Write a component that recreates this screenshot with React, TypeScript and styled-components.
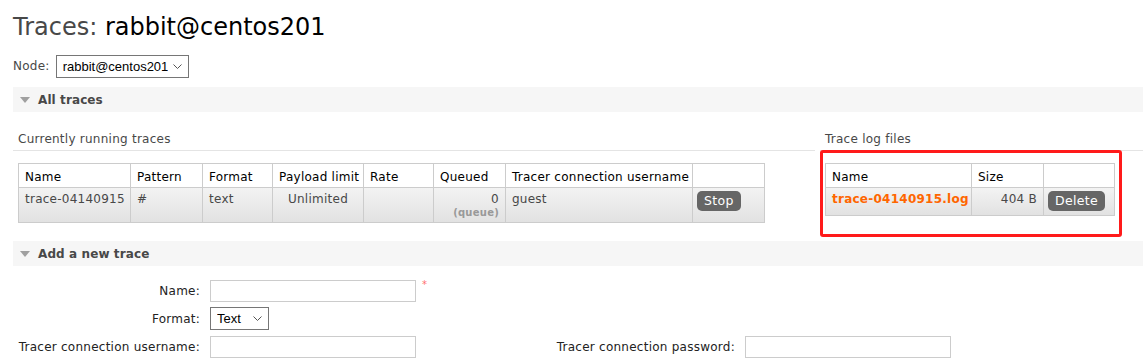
import React from 'react';
import styled, { createGlobalStyle } from 'styled-components';

const GlobalStyle = createGlobalStyle`
    html, body {
        margin: 0;
        padding: 0;
        background: #fff;
        overflow: hidden;
    }
    body {
        font-family: 'DejaVu Sans', Verdana, sans-serif;
        font-size: 12px;
        letter-spacing: 0.25px;
        color: #484848;
    }
`;

const Page = styled.div`
    width: 1200px;
    padding: 0 0 0 13px;
`;

const Title = styled.h1`
    margin: 10px 0 0;
    font-size: 24px;
    line-height: 34px;
    font-weight: normal;
    letter-spacing: 0;
    color: #484848;

    b {
        font-weight: normal;
        color: #000;
    }
`;

const NodeRow = styled.div`
    display: flex;
    align-items: center;
    gap: 6px;
    margin-top: 10px;
    height: 24px;
`;

const Label = styled.span`
    color: #484848;
`;

const SelectBox = styled.span<{ $width: number }>`
    position: relative;
    display: inline-block;
    width: ${({ $width }) => $width}px;
    height: 23px;
`;

const Select = styled.select`
    appearance: none;
    width: 100%;
    height: 100%;
    box-sizing: border-box;
    font-family: 'Liberation Sans', Arial, sans-serif;
    font-size: 13px;
    letter-spacing: 0;
    color: #000;
    border: 1px solid #767676;
    border-radius: 0;
    background: #fff;
    padding: 0 20px 0 6px;
`;

const Chevron = styled.svg`
    position: absolute;
    right: 7px;
    top: 9px;
    pointer-events: none;
`;

const SectionBar = styled.div<{ $top: number }>`
    display: flex;
    align-items: center;
    height: 25px;
    margin-top: ${({ $top }) => $top}px;
    background: #f6f6f6;
    font-weight: bold;
    letter-spacing: 0.1px;
    color: #484848;
    gap: 8px;
    padding-left: 7px;
`;

const Caret = styled.span`
    width: 0;
    height: 0;
    border-left: 5px solid transparent;
    border-right: 5px solid transparent;
    border-top: 6px solid #a0a0a0;
`;

const Columns = styled.div`
    display: flex;
    gap: 5px;
`;

const LeftCol = styled.div`
    width: 802px;
`;

const RightCol = styled.div`
    flex: 1;
`;

const SubHeading = styled.h3`
    margin: 0;
    padding: 19px 5px 3px;
    font-size: 12px;
    line-height: 16px;
    font-weight: normal;
    color: #484848;
    border-bottom: 1px solid #e4e4e4;
`;

const Highlight = styled.div`
    border: 3px solid #ff1a1a;
    border-radius: 3px;
    margin-top: -1px;
    padding: 10px 5px 18px 2px;
    width: 289px;
`;

const Table = styled.table<{ $width: number; $inset?: number; $top?: number }>`
    border-collapse: collapse;
    table-layout: fixed;
    width: ${({ $width }) => $width}px;
    margin: ${({ $top = 12 }) => $top}px 0 0 ${({ $inset = 0 }) => $inset}px;

    th,
    td {
        border: 1px solid #cccccc;
        padding: 3px 6px 4px;
        text-align: left;
        vertical-align: top;
        line-height: 16px;
        white-space: nowrap;
    }

    th {
        padding: 5px 6px 2px;
        font-weight: normal;
        color: #000;
        background: #fff;
    }

    tbody tr {
        background: linear-gradient(#f3f3f3, #e1e1e1);
    }

    td {
        color: #484848;
    }
`;

const NumCell = styled.td<{ $align?: 'right' | 'center' }>`
    && {
        text-align: ${({ $align = 'right' }) => $align};
    }
`;

const Sub = styled.sub`
    display: block;
    font-size: 10px;
    line-height: 10px;
    font-weight: bold;
    color: #999;
    vertical-align: baseline;
    margin-top: 1px;
`;

const ActionButton = styled.button`
    height: 20px;
    padding: 0 7px;
    border: none;
    border-radius: 5px;
    background: #666;
    color: #fff;
    font-family: 'DejaVu Sans', Verdana, sans-serif;
    font-size: 12.5px;
    letter-spacing: 0.3px;
    line-height: 20px;
`;

const ButtonCell = styled.td`
    && {
        padding: 3px 4px 4px 4px;
    }
`;

const FileLink = styled.a`
    color: #ff6600;
    font-weight: bold;
    text-decoration: none;
`;

const Form = styled.div`
    display: grid;
    grid-template-columns: 187px 334px 181px 206px;
    grid-auto-rows: 23px;
    column-gap: 10px;
    row-gap: 5px;
    margin-top: 13px;
    align-items: center;
`;

const FormLabel = styled.label`
    text-align: right;
    color: #222;
`;

const InputWrap = styled.div`
    display: flex;
    align-items: flex-start;
    gap: 6px;
`;

const TextInput = styled.input`
    width: 206px;
    height: 22px;
    box-sizing: border-box;
    border: 1px solid #cccccc;
    padding: 0 3px;
`;

const Required = styled.span`
    color: #ff6f6f;
    font-size: 10px;
    line-height: 10px;
`;

const Empty = styled.div``;

const DropDown = ({ width, value, options }: { width: number; value: string; options: string[] }) => (
    <SelectBox $width={width}>
        <Select defaultValue={value}>
            {options.map((o) => (
                <option key={o} value={o}>
                    {o}
                </option>
            ))}
        </Select>
        <Chevron width="9" height="5" viewBox="0 0 9 5">
            <path d="M0.5 0.5 L4.5 4.5 L8.5 0.5" fill="none" stroke="#555" strokeWidth="1" />
        </Chevron>
    </SelectBox>
);

const runningTraces = [
    {
        name: 'trace-04140915',
        pattern: '#',
        format: 'text',
        limit: 'Unlimited',
        rate: '',
        queued: '0',
        user: 'guest',
    },
];

const logFiles = [{ name: 'trace-04140915.log', size: '404 B' }];

export default function App() {
    return (
        <Page>
            <GlobalStyle />
            <Title>
                Traces: <b>rabbit@centos201</b>
            </Title>
            <NodeRow>
                <Label>Node:</Label>
                <DropDown width={133} value="rabbit@centos201" options={['rabbit@centos201']} />
            </NodeRow>

            <SectionBar $top={9}>
                <Caret />
                All traces
            </SectionBar>

            <Columns>
                <LeftCol>
                    <SubHeading>Currently running traces</SubHeading>
                    <Table $width={746} $inset={5}>
                        <colgroup>
                            <col style={{ width: 112 }} />
                            <col style={{ width: 72 }} />
                            <col style={{ width: 70 }} />
                            <col style={{ width: 91 }} />
                            <col style={{ width: 70 }} />
                            <col style={{ width: 72 }} />
                            <col style={{ width: 187 }} />
                            <col style={{ width: 72 }} />
                        </colgroup>
                        <thead>
                            <tr>
                                <th>Name</th>
                                <th>Pattern</th>
                                <th>Format</th>
                                <th>Payload limit</th>
                                <th>Rate</th>
                                <th>Queued</th>
                                <th>Tracer connection username</th>
                                <th></th>
                            </tr>
                        </thead>
                        <tbody>
                            {runningTraces.map((t) => (
                                <tr key={t.name}>
                                    <td>{t.name}</td>
                                    <td>{t.pattern}</td>
                                    <td>{t.format}</td>
                                    <NumCell $align="center">{t.limit}</NumCell>
                                    <td>{t.rate}</td>
                                    <NumCell>
                                        {t.queued}
                                        <Sub>(queue)</Sub>
                                    </NumCell>
                                    <td>{t.user}</td>
                                    <ButtonCell>
                                        <ActionButton>Stop</ActionButton>
                                    </ButtonCell>
                                </tr>
                            ))}
                        </tbody>
                    </Table>
                </LeftCol>

                <RightCol>
                    <SubHeading>Trace log files</SubHeading>
                    <Highlight>
                        <Table $width={289} $top={0}>
                            <colgroup>
                                <col style={{ width: 146 }} />
                                <col style={{ width: 72 }} />
                                <col style={{ width: 71 }} />
                            </colgroup>
                            <thead>
                                <tr>
                                    <th>Name</th>
                                    <th>Size</th>
                                    <th></th>
                                </tr>
                            </thead>
                            <tbody>
                                {logFiles.map((f) => (
                                    <tr key={f.name}>
                                        <td>
                                            <FileLink href="#">{f.name}</FileLink>
                                        </td>
                                        <NumCell>{f.size}</NumCell>
                                        <ButtonCell>
                                            <ActionButton>Delete</ActionButton>
                                        </ButtonCell>
                                    </tr>
                                ))}
                            </tbody>
                        </Table>
                    </Highlight>
                </RightCol>
            </Columns>

            <SectionBar $top={4}>
                <Caret />
                Add a new trace
            </SectionBar>

            <Form>
                <FormLabel>Name:</FormLabel>
                <InputWrap>
                    <TextInput type="text" />
                    <Required>*</Required>
                </InputWrap>
                <Empty />
                <Empty />

                <FormLabel>Format:</FormLabel>
                <InputWrap>
                    <DropDown width={59} value="Text" options={['Text', 'JSON']} />
                </InputWrap>
                <Empty />
                <Empty />

                <FormLabel>Tracer connection username:</FormLabel>
                <InputWrap>
                    <TextInput type="text" />
                </InputWrap>
                <FormLabel>Tracer connection password:</FormLabel>
                <InputWrap>
                    <TextInput type="password" />
                </InputWrap>
            </Form>
        </Page>
    );
}
